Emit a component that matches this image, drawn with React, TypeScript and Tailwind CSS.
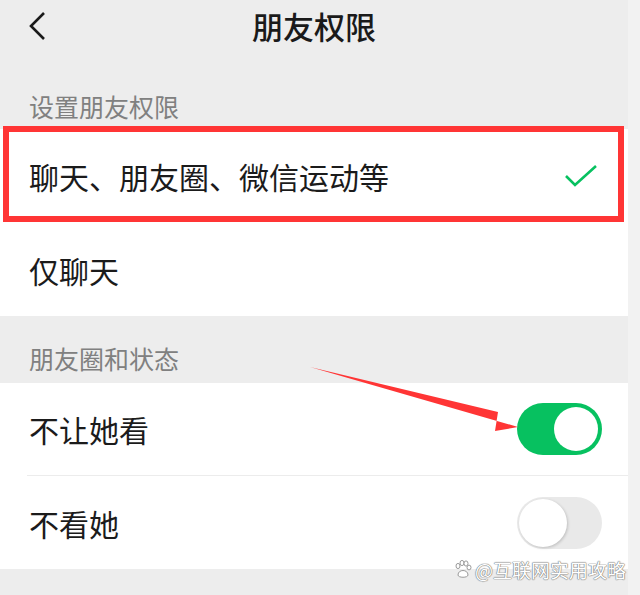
const font = { fontFamily: '"Noto Sans CJK SC", "Noto Sans", sans-serif' };

function Toggle({ on }: { on: boolean }) {
  if (on) {
    return (
      <div className="w-[85px] h-[52px] rounded-full bg-[#07c160] flex items-center justify-end pr-[4px]">
        <div className="w-[44px] h-[44px] rounded-full bg-white" />
      </div>
    );
  }
  return (
    <div className="w-[85px] h-[52px] rounded-full bg-[#e9e9e9] flex items-center pl-[2px]">
      <div className="w-[48px] h-[48px] rounded-full bg-white shadow-[1px_1px_3px_rgba(0,0,0,0.18)]" />
    </div>
  );
}

function Row({ label, children, divider }: { label: string; children?: React.ReactNode; divider?: boolean }) {
  return (
    <div className="bg-white h-[93px] flex flex-col">
      <div className="flex-1 flex items-center justify-between pl-[29px] pr-[26px]">
        <span className="text-[30px] text-[#1b1b1b] leading-none">{label}</span>
        {children}
      </div>
      {divider && <div className="ml-[27px] h-px bg-[#ececec]" />}
    </div>
  );
}

function SectionLabel({ text, h }: { text: string; h: string }) {
  return (
    <div className={`${h} flex items-end pl-[29px] pb-[12px]`}>
      <span className="text-[25px] text-[#808080] leading-none">{text}</span>
    </div>
  );
}

export default function App() {
  return (
    <div className="w-[640px] h-[595px] flex bg-[#ededed] overflow-hidden" style={font}>
      <div className="w-[628px] relative flex flex-col">
        <div className="h-[50px] flex items-center relative">
          <svg className="absolute left-[26px] top-[10px]" width="22" height="32" viewBox="0 0 22 32">
            <path d="M18 3 L5 16 L18 29" fill="none" stroke="#1a1a1a" strokeWidth="2.6" />
          </svg>
          <div className="flex-1 text-center text-[31px] font-medium text-[#1a1a1a] leading-none">朋友权限</div>
        </div>

        <div className="h-[79px] flex items-end pl-[29px] pb-[10px]">
          <span className="text-[25px] text-[#808080] leading-none">设置朋友权限</span>
        </div>

        <div className="bg-white h-[94px] flex items-center justify-between pl-[29px] pr-[30px]">
          <span className="text-[30px] text-[#1b1b1b] leading-none">聊天、朋友圈、微信运动等</span>
          <svg width="34" height="24" viewBox="0 0 34 24">
            <path d="M2 12 L11 21 L32 2" fill="none" stroke="#07c160" strokeWidth="2.6" />
          </svg>
        </div>
        <Row label="仅聊天" />

        <SectionLabel text="朋友圈和状态" h="h-[67px]" />

        <Row label="不让她看" divider>
          <Toggle on />
        </Row>
        <Row label="不看她">
          <Toggle on={false} />
        </Row>

        <div className="absolute left-[3px] top-[126px] w-[621px] h-[96px] border-[6px] border-[#ff3535]" />

        <svg className="absolute left-0 top-0 pointer-events-none" width="628" height="595" viewBox="0 0 628 595">
          <polygon points="310,367 498,412 495,431 518,427" fill="#ff3535" />
        </svg>

        <div className="absolute right-[2px] top-[559px] flex items-center gap-[2px]">
          <svg width="20" height="20" viewBox="0 0 20 20">
            <g fill="#fff" stroke="#9a9a9a" strokeWidth="1">
              <ellipse cx="5" cy="7" rx="2" ry="2.6" />
              <ellipse cx="9" cy="4" rx="2" ry="2.6" />
              <ellipse cx="13" cy="4.5" rx="2" ry="2.6" />
              <ellipse cx="16" cy="8.5" rx="2" ry="2.4" />
              <path d="M5 16 C5 10 15 10 15 16 C15 19 5 19 5 16 Z" />
            </g>
          </svg>
          <span
            className="text-[19px] text-white leading-none"
            style={{ textShadow: "0 0 1px #777, 0 0 1px #777, 0 0 1px #777" }}
          >
            @互联网实用攻略
          </span>
        </div>
      </div>
      <div className="flex-1 bg-[#f2f2f2]" />
    </div>
  );
}
